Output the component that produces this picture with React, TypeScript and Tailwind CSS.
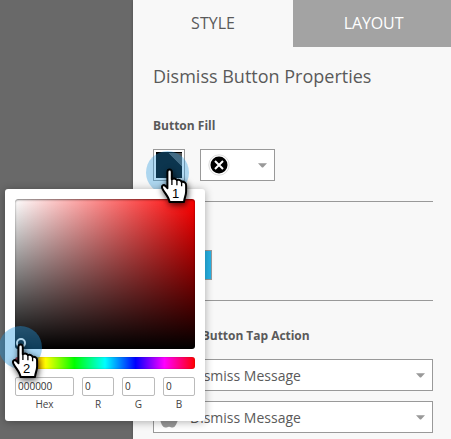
import React from "react";

function Caret() {
  return (
    <svg width="9" height="5" viewBox="0 0 9 5" className="shrink-0">
      <path d="M0 0.2H9L5 4.6H4Z" fill="#999" />
    </svg>
  );
}

function Hand({ label }: { label: string }) {
  return (
    <svg width="44" height="52" viewBox="-6 -4 44 52" className="block overflow-visible">
      <path
        d="M6.4 4C6.4 .8 10.8 .8 10.8 4V11.2C13 10 15.2 10.6 15.9 12.2C18 11.3 20 12.2 20.6 14C23.2 13.4 25.1 14.8 25.1 17.4V23.5C25.1 27.3 23.4 29.7 23 33.9H8.5C8 29.5 4.8 26.5 1.7 21.2C-.3 17.8 2.6 16 4.6 18.2L6.4 20.2Z"
        fill="#fff"
        stroke="#000"
        strokeWidth="2"
        strokeLinejoin="round"
        className="drop-shadow-[1px_2px_3px_rgba(0,0,0,0.7)]"
      />
      <path d="M10.9 10V17M15.9 12V17.2M20.6 14V18.2" stroke="#000" strokeWidth="1.3" />
      <text x="14.7" y="30" textAnchor="middle" fontSize="13" className="font-['Liberation_Sans',sans-serif]">
        {label}
      </text>
    </svg>
  );
}

function ActionSelect({ kind }: { kind: string }) {
  return (
    <div className="flex h-8 items-center border border-[#999] bg-white pr-[7px] pl-[6px]">
      <svg width="18" height="22" viewBox="0 0 18 22" className="mr-[12px] shrink-0">
        {kind === "apple" ? (
          <path d="M12.5 1Q12 5 8.8 5.5Q9 2 12.5 1M9 6.5C11 5 14 5.2 16.5 8Q13 11 18 14C16.5 18 15 21.5 12.7 21.5C11 21.5 10.7 20.7 9 20.7C7.5 20.7 7 21.5 5.3 21.5C3 21.5 1.2 18 .5 15C-1 7 5 4.5 9 6.5Z" fill="#999" />
        ) : (
          <path d="M2 8Q3 3 9 3T16 8ZM2 9H16V17H2Z" fill="#999" />
        )}
      </svg>
      <span className="relative top-px flex-1 text-sm leading-5">Dismiss Message</span>
      <Caret />
    </div>
  );
}

function Field({ value, label, width }: { value: string; label: string; width: string }) {
  return (
    <div className={`${width} text-center text-[10px] text-[#444]`}>
      <div className="h-[19px] rounded-[2px] border border-[#bbb] bg-white pl-[2px] text-left leading-[17px] text-[#333]">{value}</div>
      <div className="leading-[17px]">{label}</div>
    </div>
  );
}

function ColorPicker() {
  return (
    <div className="absolute top-[189px] left-[5px] h-[232px] w-[200px] rounded-[3px] bg-white p-[10px] shadow-[0_1px_8px_rgba(0,0,0,0.32)]">
      <div className="h-[150px] rounded-[3px] bg-[linear-gradient(to_top,#000,transparent),linear-gradient(to_right,#fff,#f00)] shadow-[inset_0_1px_2px_rgba(0,0,0,0.5)]" />
      <div className="mt-2 h-3 rounded-[3px] bg-[linear-gradient(to_right,#f00,#ff0_17%,#0f0_33%,#0ff_50%,#00f_67%,#f0f_83%,#f00)] shadow-[inset_0_0_2px_rgba(0,0,0,0.25)]" />
      <div className="mt-2 flex justify-between">
        <Field value="000000" label="Hex" width="w-[59px]" />
        <Field value="0" label="R" width="w-[32px]" />
        <Field value="0" label="G" width="w-[33px]" />
        <Field value="0" label="B" width="w-[32px]" />
      </div>
    </div>
  );
}

export default function App() {
  return (
    <div className="relative flex h-[439px] w-[451px] overflow-hidden bg-[#696969] font-['Open_Sans',sans-serif] text-[#5a5a5a]">
      <main className="ml-[133px] w-[318px] bg-[#f8f8f8] shadow-[0_0_3px_rgba(0,0,0,0.3)]">
        <nav className="flex h-[47px] text-center text-base leading-[47px]">
          <div className="w-40">STYLE</div>
          <div className="flex-1 bg-[#a3a3a3] pl-[3px] tracking-[-0.1px] text-white">LAYOUT</div>
        </nav>
        <div className="pr-[18px] pl-5">
          <h1 className="mt-[17px] text-lg leading-6">Dismiss Button Properties</h1>
          <h2 className="mt-[30px] text-xs leading-4 font-bold">Button Fill</h2>
          <div className="mt-[15px] flex gap-[15px]">
            <div className="size-8 border border-[#999] bg-white p-0.5">
              <div className="size-full bg-[linear-gradient(45deg,#000_71%,#555_73%)] shadow-[inset_0_1px_0_#000]" />
            </div>
            <div className="flex h-8 w-[75px] items-center justify-between border border-[#999] bg-white pr-[7px] pl-[7px]">
              <svg width="22" height="22" viewBox="0 0 22 22">
                <circle cx="11" cy="11" r="10.2" fill="#fff" stroke="#ddd" />
                <circle cx="11" cy="11" r="8.5" />
                <path d="M7 7L15 15M15 7L7 15" stroke="#fff" strokeWidth="2" />
              </svg>
              <Caret />
            </div>
          </div>
          <div className="mt-5 border-t border-[#999]" />
          <div className="mt-12 h-[30px] w-[59px] border border-[#999] bg-[#27b2e5]" />
          <div className="mt-5 border-t border-[#999]" />
          <h2 className="mt-[27px] text-xs leading-4 font-bold tracking-[-0.03px]">Dismiss Button Tap Action</h2>
          <div className="mt-[15px] flex flex-col gap-[10px]">
            <ActionSelect kind="android" />
            <ActionSelect kind="apple" />
          </div>
        </div>
      </main>
      <div className="absolute top-[151px] left-[146px] size-[43px] rounded-full bg-[#2398e0]/35" />
      <ColorPicker />
      <div className="absolute top-[326px] left-[-1px] size-[43px] rounded-full bg-[#2398e0]/40" />
      <div className="absolute top-[338px] left-[16px] size-[10px] rounded-full border-[2.5px] border-[#b5d9ee]" />
      <div className="absolute top-[164px] left-[155px]"><Hand label="1" /></div>
      <div className="absolute top-[339px] left-[6px]"><Hand label="2" /></div>
    </div>
  );
}
